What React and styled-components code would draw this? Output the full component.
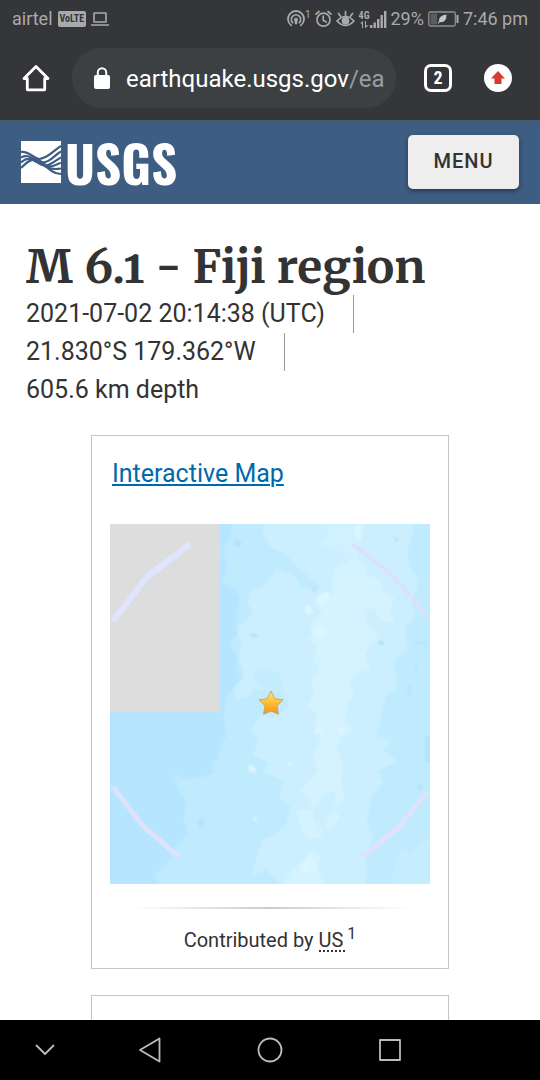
import React from 'react';
import styled, { createGlobalStyle } from 'styled-components';

const GlobalStyle = createGlobalStyle`
  *, *::before, *::after { box-sizing: border-box; }
  body {
    margin: 0;
    background: #fff;
    color: #333;
    font-family: Roboto, "Liberation Sans", sans-serif;
  }
`;

const Phone = styled.div`
  display: flex;
  flex-direction: column;
  height: 100vh;
  overflow: hidden;
`;

const BrowserChrome = styled.header`
  flex: none;
  background: #353639;
  color: #fff;
`;

const StatusBar = styled.div`
  display: flex;
  align-items: center;
  height: 38px;
  padding: 0 12px;
  color: #a9aaab;
  font-size: 18px;
  line-height: 38px;
`;

const StatusGroup = styled.div`
  display: flex;
  align-items: center;
  gap: ${(p) => p.$gap || 4}px;
  margin-left: ${(p) => (p.$end ? 'auto' : 0)};
`;

const VolteBadge = styled.span`
  padding: 0 2px;
  border-radius: 2px;
  background: #a9aaab;
  color: #353639;
  font: bold 10px/16px "Roboto Condensed", Roboto, sans-serif;
`;

const Hotspot = styled.span`
  display: flex;
  align-items: center;

  sup {
    align-self: flex-start;
    font-size: 10px;
    line-height: 10px;
  }
`;

const Signal = styled.span`
  display: flex;
  align-items: flex-end;
`;

const Network = styled.span`
  display: flex;
  flex-direction: column;
  align-items: center;
  font: bold 10px/10px "Roboto Condensed", Roboto, sans-serif;
`;

const Toolbar = styled.div`
  display: flex;
  align-items: center;
  height: 82px;
  padding: 0 28px 2px 20px;
`;

const IconButton = styled.button`
  display: flex;
  align-items: center;
  justify-content: center;
  width: 32px;
  height: 32px;
  padding: 0;
  border: 0;
  background: none;
  color: inherit;
`;

const AddressBar = styled.form`
  display: flex;
  flex: 1;
  align-items: center;
  min-width: 0;
  height: 60px;
  margin: 0 28px 0 20px;
  padding: 2px 8px 0 20px;
  border-radius: 30px;
  background: #3c4043;
  font-size: 24px;
`;

const AddressInput = styled.input`
  field-sizing: content;
  min-width: 0;
  margin-left: 14px;
  padding: 0;
  border: 0;
  outline: 0;
  background: none;
  color: #fff;
  font: inherit;
`;

const AddressPath = styled.span`
  color: #9a9da0;
`;

const TabCount = styled.button`
  width: 28px;
  height: 28px;
  margin: 0 32px 0 0;
  padding: 0;
  border: 3px solid #fff;
  border-radius: 7px;
  background: none;
  color: #fff;
  font: bold 18px/22px "Roboto Condensed", Roboto, sans-serif;
`;

const UpdateButton = styled(IconButton)`
  width: 28px;
  height: 28px;
  border-radius: 50%;
  background: #fff;
  color: #d63b2f;
`;

const SiteHeader = styled.div`
  display: flex;
  flex: none;
  align-items: center;
  justify-content: space-between;
  height: 84px;
  padding: 0 21px;
  background: linear-gradient(#435a72, #3d5e82 6px);
`;

const Brand = styled.a`
  display: flex;
  align-items: center;
  gap: 4px;
  color: #fff;
  text-decoration: none;
  font: bold 51px/54px Oswald, "Roboto Condensed", "Liberation Sans", sans-serif;
`;

const MenuButton = styled.button`
  width: 111px;
  height: 54px;
  padding: 0 0 2px;
  border: 0;
  border-radius: 5px;
  background: #eee;
  box-shadow: 0 2px 5px rgba(0, 0, 0, 0.4);
  color: #333;
  font: 500 20px/24px Roboto, sans-serif;
  letter-spacing: 1px;
`;

const Content = styled.main`
  flex: 1;
  min-height: 0;
  overflow: hidden;
  padding-top: 36px;
`;

const EventHeader = styled.div`
  padding: 0 26px;
`;

const EventTitle = styled.h1`
  margin: 0;
  font: bold 46px/55px Merriweather, "DejaVu Serif Condensed", "DejaVu Serif", serif;
  font-variant-numeric: oldstyle-nums;
  white-space: nowrap;
`;

const EventFacts = styled.ul`
  display: flex;
  flex-direction: column;
  align-items: flex-start;
  margin: 0;
  padding: 0;
  list-style: none;
  font-size: 25px;
  line-height: 38px;
`;

const Fact = styled.li`
  padding-right: 28px;
  border-right: 1px solid #999;

  &:last-child { border-right: 0; }
`;

const Cards = styled.div`
  display: flex;
  flex-direction: column;
  gap: 26px;
  margin: 26px 91px 0;
`;

const Card = styled.section`
  min-height: 120px;
  padding: 18px 18px 12px;
  border: 1px solid #c4c4c4;
  background: #fff;
`;

const CardTitle = styled.h2`
  margin: 0 2px 30px;
  font-size: 25px;
  font-weight: 400;
  line-height: 40px;
`;

const Link = styled.a`
  color: #0068ad;
  text-decoration: underline;
  text-decoration-thickness: 2px;
  text-underline-offset: 2px;
`;

const MapDrawing = styled.svg`
  display: block;
  width: 100%;
  height: auto;
`;

const Rule = styled.hr`
  height: 2px;
  margin: 23px 20px 15px;
  border: 0;
  background: linear-gradient(to right, transparent, #ccc, transparent);
`;

const Credit = styled.p`
  margin: 0;
  font-size: 20px;
  line-height: 32px;
  text-align: center;

  abbr {
    padding-right: 4px;
    text-decoration: none;
    background: repeating-linear-gradient(to right, #333 0 2px, transparent 2px 4px) left bottom / 100% 2px no-repeat;
  }

  sup {
    font-size: 16px;
    line-height: 0;
  }
`;

const NavBar = styled.nav`
  display: flex;
  flex: none;
  align-items: center;
  height: 60px;
  padding-left: 29px;
  gap: 88px;
  background: #000;
  color: #bbb;

  button:first-child { margin-right: -15px; }
`;

const stroke = { fill: 'none', stroke: 'currentColor', strokeLinecap: 'round', strokeLinejoin: 'round' };

function LaptopIcon() {
  return (
    <svg width="18" height="14" viewBox="0 0 18 14" {...stroke} strokeWidth="1.6" strokeLinecap="butt">
      <path d="M3 1h12v9H3zM0 13h18" />
    </svg>
  );
}

function HotspotIcon() {
  return (
    <svg width="18" height="18" viewBox="0 0 18 18" {...stroke} strokeWidth="1.8">
      <path d="M4.200 15.400a8 8 0 1 1 9.600 0M5.600 12.600a4.600 4.600 0 1 1 6.800 0" />
      <path d="M9 7.800a2 2 0 0 1 1.200 3.600v2.800H7.800v-2.800A2 2 0 0 1 9 7.800z" fill="currentColor" stroke="none" />
    </svg>
  );
}

function AlarmIcon() {
  return (
    <svg width="17" height="18" viewBox="0 0 17 18" {...stroke} strokeWidth="1.7">
      <circle cx="8.5" cy="9.7" r="6.5" />
      <path d="M8.2 6v4.2l3 1.8M1 4.2 4 1.5M16 4.2l-3-2.7" />
    </svg>
  );
}

function EyeIcon() {
  return (
    <svg width="19" height="18" viewBox="0 0 19 18" {...stroke} strokeWidth="1.700">
      <path d="M1 11q8.500-9 17 0q-8.500 9-17 0zM9.500 5V1.500M4.500 6.300 2.500 3.500M14.500 6.300l2-2.800" />
      <circle cx="9.500" cy="10.900" r="3.800" fill="currentColor" stroke="none" />
    </svg>
  );
}

function SignalIcon() {
  return (
    <svg width="17" height="18" viewBox="0 0 17 18" fill="currentColor">
      <path d="M0 15h2.400v3H0zM3.500 12.500h2.400V18H3.500zM7 9h2.400v9H7zM10.500 5h2.400v13h-2.400zM14 1h2.400v17H14z" />
    </svg>
  );
}

function DataArrows() {
  return (
    <svg width="9" height="7" viewBox="0 0 9 7" fill="currentColor">
      <path d="M2 7V2.500H0L3 0v7zM6 0v4.500H9L5 7V0z" />
    </svg>
  );
}

function BatteryIcon() {
  return (
    <svg width="31" height="16" viewBox="0 0 31 16">
      <rect x=".8" y="1" width="26.500" height="14" rx="1.500" fill="none" stroke="#8f9092" strokeWidth="1.300" />
      <path d="M2.500 2.600h6.500v10.800H2.500z" fill="#5c5d60" />
      <path d="M28.500 4h2v8h-2z" fill="#a9aaab" />
      <path d="M18.500 3.500q-8 1-7.500 6.500L9.800 12.300l1 .3 1-1.500q7 .8 6.700-7.600z" fill="#c4c5c5" />
    </svg>
  );
}

function HomeIcon() {
  return (
    <svg width="28" height="28" viewBox="0 0 28 28" {...stroke} strokeWidth="2.800">
      <path d="M2 14.500 14 2.500l12 12h-3.300v11.300H5.300V14.500z" />
    </svg>
  );
}

function LockIcon() {
  return (
    <svg width="20" height="24" viewBox="0 0 20 24">
      <rect x="2" y="8" width="16" height="14" rx="2" fill="#fff" />
      <path d="M5.800 9V5.500a4.200 4.200 0 0 1 8.400 0v3.500" fill="none" stroke="#fff" strokeWidth="2" />
    </svg>
  );
}

function UpArrowIcon() {
  return (
    <svg width="16" height="14" viewBox="0 0 16 14" fill="currentColor">
      <path d="M8 0l7 7.500h-3.500V13h-7V7.500H1z" />
    </svg>
  );
}

function WaveMark() {
  return (
    <svg width="40" height="42" viewBox="0 0 40 42">
      <path d="M0 0h40v42H0z" fill="#fff" />
      <g fill="none" stroke="#3d5e82" strokeWidth="2.200">
        <path d="M0 11C8 10 12 17 18 18C26 18 32 10 40 5" />
        <path d="M0 16.500C8 12 12 19 19 21C28 23 32 15 40 10.500" />
        <path d="M0 21.500C8 14 13 20 20 23.500C28 27 33 20 40 16.500" />
        <path d="M0 27C8 19 14 15 22 22C30 29 34 23 40 22" />
        <path d="M14 18C22 19 28 33 40 33" />
        <path d="M20 22C26 28 32 29 40 27.500" />
      </g>
    </svg>
  );
}

function EventMap() {
  return (
    <MapDrawing viewBox="0 0 320 360" role="img" aria-label="Epicenter south of Fiji">
      <defs>
        <linearGradient id="starFill" x1="0" y1="0" x2="0" y2="1">
          <stop offset="0" stopColor="#ffe679" />
          <stop offset=".45" stopColor="#ffc236" />
          <stop offset="1" stopColor="#f7921e" />
        </linearGradient>
        <filter id="seaSoften" colorInterpolationFilters="sRGB"><feGaussianBlur stdDeviation="1.200" /></filter>
      </defs>
      <path d="M0 0h320v360H0z" fill="#c0ebff" />
      <g filter="url(#seaSoften)">
        <path d="M-5-5h127l-2 20-8 12 6 14-6 18 12 6 6 10-4 14 2 18-8 14 8 14-2 12 8 8-6 10-12 6-2 20 2 22-6 10-2 12-8 4 4 10-12 4-18 3-10-6 4 14 8 12-2 20 4 14-10 10-8 16-6 8-10 6 6 14-4 18 2 14H-5z" fill="#b6e5ff" />
        <path d="M157-5l-4 14 8 14 16 8 10 12 24 20-6 4-14-4-8-12-16-6-12 16-14 6-4 12 6 8-8 12-8 4 4 18-2 14 6 16-12 14 4 10 10-2 8-10 6 4 12-4 12 8 4 12-12 10-16-2-10 16 8 10-6 14 16 8-6 8 20 10-4 16 12 10-4 16-12 12-12 4-6 18-6 20 14-8 12 10 6 10-2 10h80l6-22-2-22 8-16-6-18 4-24 12-14-6-12 20-10-14-10 8-10-14-6 4-20 4-18 12-10-4-26 14-12-2-22 12-14-6-12 8-20-10-16-2-14 8-26z" fill="#cbefff" />
        <path d="M214-5l4 16-10 10 20 6 10 10 10-4 2-14 8-24z" fill="#d0f1ff" />
        <path d="M225 45l-4 10 2 14-12 4-6 10 8 6-12 8 4 12-8 6 10 8-4 12 6 12-8 10 4 10-8 16 10 6-2 14 6 10-8 16 4 18-10 12-8 8 12 8 2 18 8 16 8-16 6-12 10-6-4-16 2-20-6-14 6-14 10-4-8-10 4-20 6-6-6-12 8-10 14-4-6-14 6-10 8-8-10-10-6-16 10-4 8 14 14 2-6-12 6-14-12-6-4-12-12-4-2-10-10-8zM186 287l18-2 10-14 12-4-2 16 6 10-8 12-14-4 6 12-14 2-8-8zM172 360l12-16 10-8 6-10 10 6-2 14 6 14z" fill="#d4f3ff" />
        <path d="M208 71l10-4 2 8-8 6-7-2zM194 83l6-2 3 8-6 2zM200 105l10-4 8 8-4 6-10-2zM204 204l7-1 2 6-7 1zM228 203l6 1-1 7-4-1zM139 240l8 4-3 5-6-3zM178 238l5 1-4 5zM143 292l5 3-4 3zM245 2l6 0 0 16-6-6zM190 342l10-10 6 8-12 12z" fill="#dcf6ff" />
        <path d="M124 16l8 1-2 6-6-1zM284 12l6 4-5 2zM268 117h6v4h-6zM303 118h14v2h-14zM305 143h2v8h-2zM298 162h3v9h-3zM88 296l6-4v9l-5 3zM315 212h5v26h-5zM308 260h4v6h-4zM202 66l6-3-3 6zM140 110h8v3h-8z" fill="#b5e2f5" />
        <path d="M146 148q14-6 24 2l2 18q-14 6-20-6l-8-6z" fill="#c3ecfd" />
        <path d="M282 360l4-22 6-14 8 6 10-10 10-6v46z" fill="#c6edff" />
      </g>
      <path d="M0 0h110v188H0z" fill="#ddd" />
      <g fill="none" strokeWidth="4" strokeLinejoin="round">
        <path d="M3 97 37 53 80 20" stroke="#dfe4ff" strokeWidth="6" />
        <path d="M242 20 280 49 298 69 317 93" stroke="#dce1fb" />
        <path d="M3 263 32 301 69 333" stroke="#dee2fc" strokeWidth="5" />
        <path d="M252 333 288 304 317 268" stroke="#dee2fc" strokeWidth="5" />
      </g>
      <path
        d="M161 167l3.800 7.700 8.200 1.100-6 6.100 1.500 8.300-7.500-3.200-7.500 3.200 1.500-8.300-6-6.100 8.200-1.100z"
        fill="url(#starFill)" stroke="#c79a55" strokeWidth=".8" strokeLinejoin="round"
      />
    </MapDrawing>
  );
}

function NavIcon({ path }) {
  return (
    <svg width="28" height="28" viewBox="0 0 28 28" {...stroke} strokeWidth="1.800">
      <path d={path} />
    </svg>
  );
}

const NAV_KEYS = [
  ['Hide keys', 'M5.500 9.500 14 18l8.500-8.500'],
  ['Back', 'M23.500 2.500v23L4 14z'],
  ['Home', 'M14 2.500a11.500 11.500 0 1 1 0 23a11.500 11.500 0 1 1 0-23z'],
  ['Recent apps', 'M4 4h20v20H4z'],
];

const FACTS = ['2021-07-02 20:14:38 (UTC)', '21.830°S 179.362°W', '605.6 km depth'];

export default function App() {
  return (
    <Phone>
      <GlobalStyle />
      <BrowserChrome>
        <StatusBar>
          <StatusGroup $gap={5}>
            <span>airtel</span>
            <VolteBadge>VoLTE</VolteBadge>
            <LaptopIcon />
          </StatusGroup>
          <StatusGroup $end>
            <Hotspot><HotspotIcon /><sup>1</sup></Hotspot>
            <AlarmIcon />
            <EyeIcon />
            <Signal>
              <Network>4G<DataArrows /></Network>
              <SignalIcon />
            </Signal>
            <span>29%</span>
            <BatteryIcon />
            <span>7:46 pm</span>
          </StatusGroup>
        </StatusBar>
        <Toolbar>
          <IconButton aria-label="Home page"><HomeIcon /></IconButton>
          <AddressBar>
            <LockIcon />
            <AddressInput aria-label="Address" defaultValue="earthquake.usgs.gov" />
            <AddressPath>/ea</AddressPath>
          </AddressBar>
          <TabCount aria-label="2 open tabs">2</TabCount>
          <UpdateButton aria-label="Update available"><UpArrowIcon /></UpdateButton>
        </Toolbar>
      </BrowserChrome>

      <SiteHeader>
        <Brand href="#home"><WaveMark />USGS</Brand>
        <MenuButton>MENU</MenuButton>
      </SiteHeader>

      <Content>
        <EventHeader>
          <EventTitle>M 6.1 - Fiji region</EventTitle>
          <EventFacts>
            {FACTS.map((fact) => <Fact key={fact}>{fact}</Fact>)}
          </EventFacts>
        </EventHeader>
        <Cards>
          <Card>
            <CardTitle><Link href="#map">Interactive Map</Link></CardTitle>
            <EventMap />
            <Rule />
            <Credit>Contributed by <abbr title="USGS National Earthquake Information Center">US</abbr><sup>1</sup></Credit>
          </Card>
          <Card />
        </Cards>
      </Content>

      <NavBar>
        {NAV_KEYS.map(([label, path]) => (
          <IconButton key={label} aria-label={label}><NavIcon path={path} /></IconButton>
        ))}
      </NavBar>
    </Phone>
  );
}
